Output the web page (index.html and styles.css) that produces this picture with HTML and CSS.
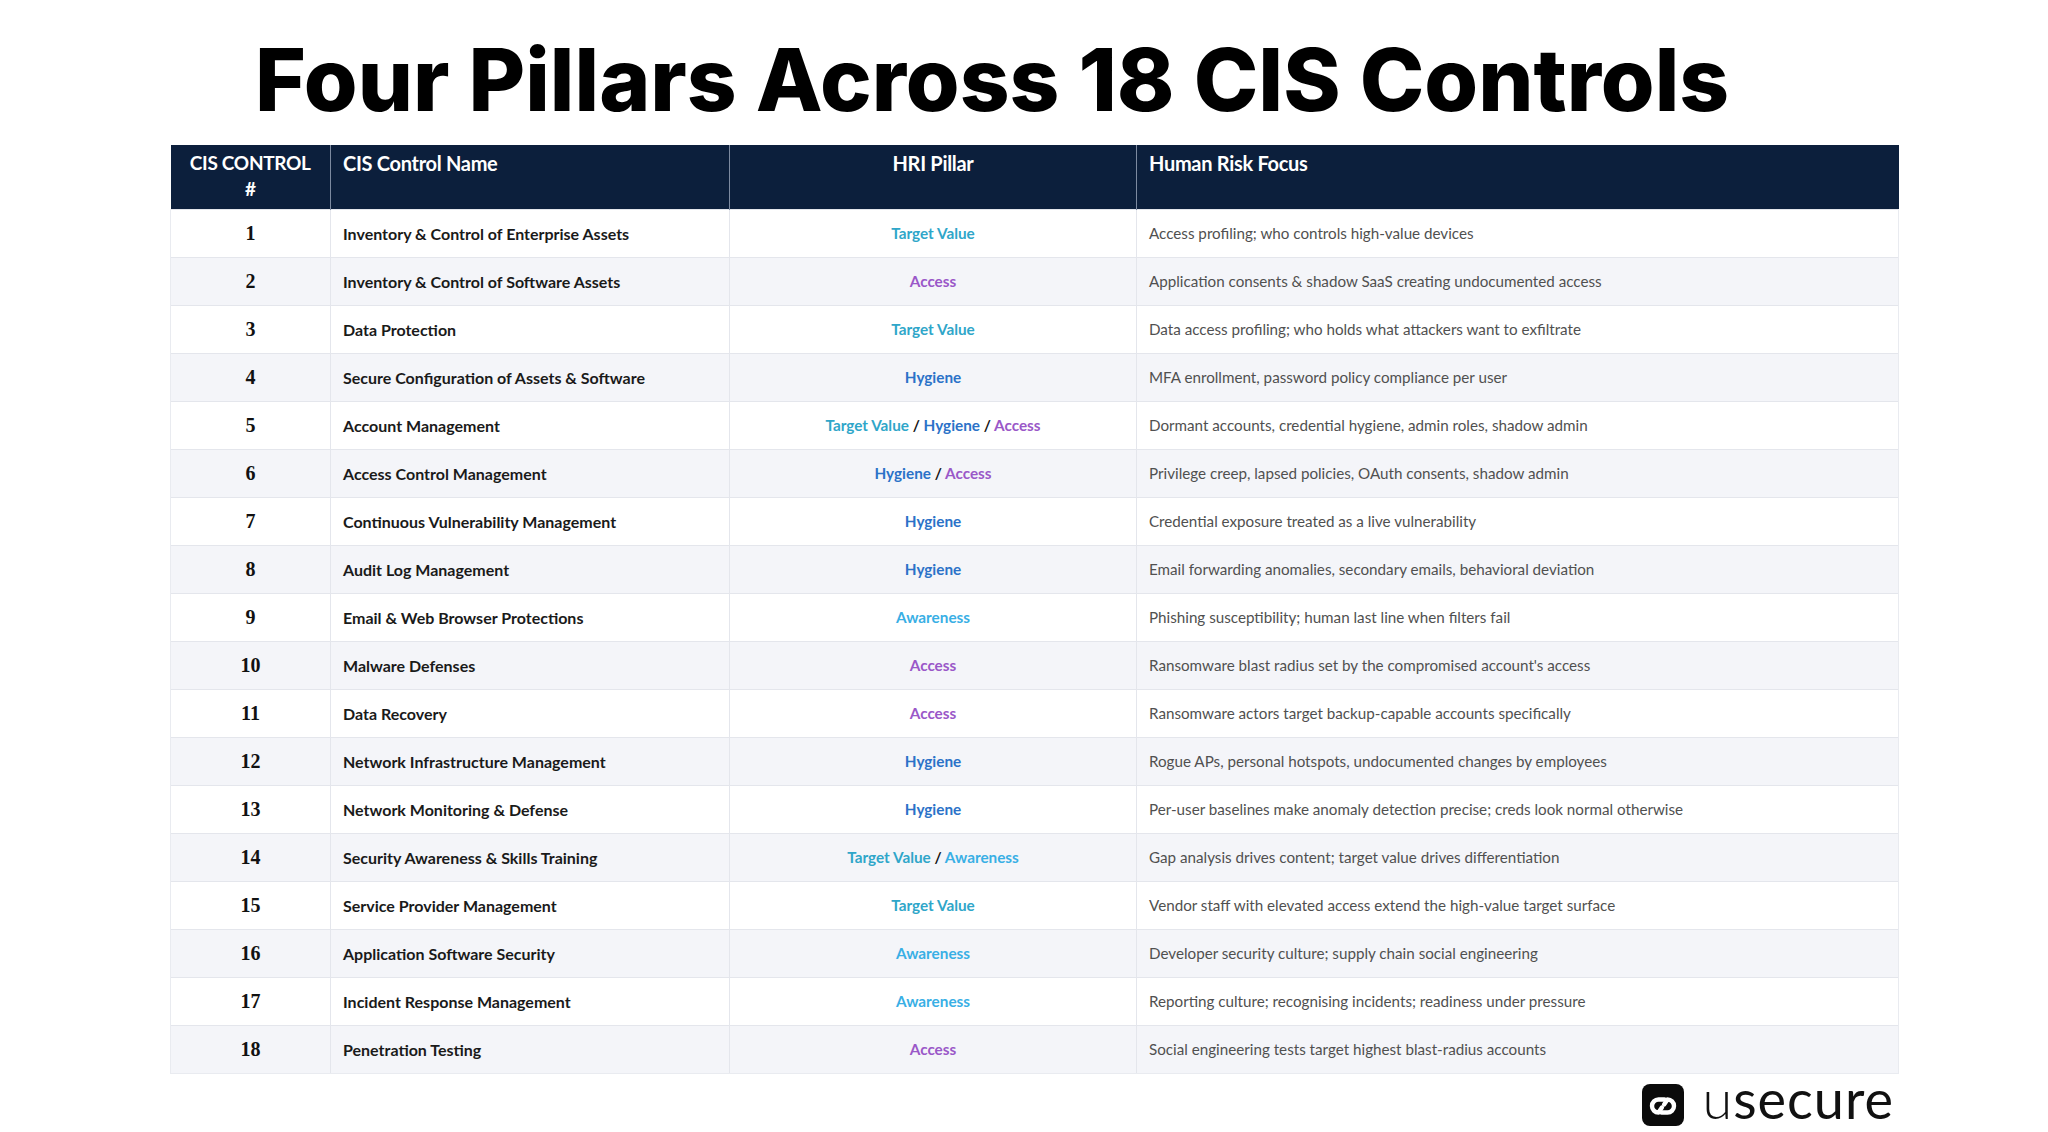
FILE: index.html
```html
<!DOCTYPE html>
<html lang="en">
<head>
<meta charset="utf-8">
<title>Four Pillars Across 18 CIS Controls</title>
<link rel="stylesheet" href="styles.css">
</head>
<body>
<div class="page">
  <h1 class="title">Four Pillars Across 18 CIS Controls</h1>
  <table class="cis">
    <colgroup>
      <col class="c-num"><col class="c-name"><col class="c-pillar"><col class="c-focus">
    </colgroup>
    <thead>
      <tr>
        <th class="num">CIS CONTROL<br>#</th>
        <th class="name">CIS Control Name</th>
        <th class="pillar">HRI Pillar</th>
        <th class="focus">Human Risk Focus</th>
      </tr>
    </thead>
    <tbody>
      <tr><td class="num">1</td><td class="name">Inventory &amp; Control of Enterprise Assets</td><td class="pillar"><span class="tv">Target Value</span></td><td class="focus">Access profiling; who controls high-value devices</td></tr>
      <tr><td class="num">2</td><td class="name">Inventory &amp; Control of Software Assets</td><td class="pillar"><span class="ac">Access</span></td><td class="focus">Application consents &amp; shadow SaaS creating undocumented access</td></tr>
      <tr><td class="num">3</td><td class="name">Data Protection</td><td class="pillar"><span class="tv">Target Value</span></td><td class="focus">Data access profiling; who holds what attackers want to exfiltrate</td></tr>
      <tr><td class="num">4</td><td class="name">Secure Configuration of Assets &amp; Software</td><td class="pillar"><span class="hy">Hygiene</span></td><td class="focus">MFA enrollment, password policy compliance per user</td></tr>
      <tr><td class="num">5</td><td class="name">Account Management</td><td class="pillar"><span class="tv">Target Value</span> / <span class="hy">Hygiene</span> / <span class="ac">Access</span></td><td class="focus">Dormant accounts, credential hygiene, admin roles, shadow admin</td></tr>
      <tr><td class="num">6</td><td class="name">Access Control Management</td><td class="pillar"><span class="hy">Hygiene</span> / <span class="ac">Access</span></td><td class="focus">Privilege creep, lapsed policies, OAuth consents, shadow admin</td></tr>
      <tr><td class="num">7</td><td class="name">Continuous Vulnerability Management</td><td class="pillar"><span class="hy">Hygiene</span></td><td class="focus">Credential exposure treated as a live vulnerability</td></tr>
      <tr><td class="num">8</td><td class="name">Audit Log Management</td><td class="pillar"><span class="hy">Hygiene</span></td><td class="focus">Email forwarding anomalies, secondary emails, behavioral deviation</td></tr>
      <tr><td class="num">9</td><td class="name">Email &amp; Web Browser Protections</td><td class="pillar"><span class="aw">Awareness</span></td><td class="focus">Phishing susceptibility; human last line when filters fail</td></tr>
      <tr><td class="num">10</td><td class="name">Malware Defenses</td><td class="pillar"><span class="ac">Access</span></td><td class="focus">Ransomware blast radius set by the compromised account's access</td></tr>
      <tr><td class="num">11</td><td class="name">Data Recovery</td><td class="pillar"><span class="ac">Access</span></td><td class="focus">Ransomware actors target backup-capable accounts specifically</td></tr>
      <tr><td class="num">12</td><td class="name">Network Infrastructure Management</td><td class="pillar"><span class="hy">Hygiene</span></td><td class="focus">Rogue APs, personal hotspots, undocumented changes by employees</td></tr>
      <tr><td class="num">13</td><td class="name">Network Monitoring &amp; Defense</td><td class="pillar"><span class="hy">Hygiene</span></td><td class="focus">Per-user baselines make anomaly detection precise; creds look normal otherwise</td></tr>
      <tr><td class="num">14</td><td class="name">Security Awareness &amp; Skills Training</td><td class="pillar"><span class="tv">Target Value</span> / <span class="aw">Awareness</span></td><td class="focus">Gap analysis drives content; target value drives differentiation</td></tr>
      <tr><td class="num">15</td><td class="name">Service Provider Management</td><td class="pillar"><span class="tv">Target Value</span></td><td class="focus">Vendor staff with elevated access extend the high-value target surface</td></tr>
      <tr><td class="num">16</td><td class="name">Application Software Security</td><td class="pillar"><span class="aw">Awareness</span></td><td class="focus">Developer security culture; supply chain social engineering</td></tr>
      <tr><td class="num">17</td><td class="name">Incident Response Management</td><td class="pillar"><span class="aw">Awareness</span></td><td class="focus">Reporting culture; recognising incidents; readiness under pressure</td></tr>
      <tr><td class="num">18</td><td class="name">Penetration Testing</td><td class="pillar"><span class="ac">Access</span></td><td class="focus">Social engineering tests target highest blast-radius accounts</td></tr>
    </tbody>
  </table>
  <div class="brand">
    <span class="brand-icon">
      <svg viewBox="0 0 42 42" width="42" height="42">
        <rect x="0" y="0" width="42" height="42" rx="8" fill="#0b0b0b"/>
        <path d="M22.5 15.5 H16.5 A6.5 6.5 0 0 0 16.5 28.5 L19.9 23.6" fill="none" stroke="#fff" stroke-width="4.4" stroke-linecap="round" stroke-linejoin="round"/>
        <path d="M19.5 28.5 H25.5 A6.5 6.5 0 0 0 25.5 15.5 L22.1 20.4" fill="none" stroke="#fff" stroke-width="4.4" stroke-linecap="round" stroke-linejoin="round"/>
      </svg>
    </span>
    <span class="brand-text"><span class="brand-u">u</span>secure</span>
  </div>
</div>
</body>
</html>
```
FILE: styles.css
```css
html, body {
  margin: 0;
  padding: 0;
  background: #ffffff;
}
.page {
  width: 2048px;
  height: 1132px;
  overflow: hidden;
  display: flex;
  flex-direction: column;
  align-items: flex-start;
}
.title {
  margin: 0;
  padding: 30px 0 0 255px;
  height: 115px;
  box-sizing: border-box;
  font-family: "Inter", "Liberation Sans", sans-serif;
  font-weight: 800;
  font-size: 87px;
  line-height: 100px;
  color: #000;
  white-space: nowrap;
}
.cis {
  margin: 30px 0 0 170px;
  width: 1728px;
  border-collapse: collapse;
  table-layout: fixed;
  font-family: "Lato", "Liberation Sans", sans-serif;
}
.c-num { width: 160px; }
.c-name { width: 399px; }
.c-pillar { width: 407px; }
.c-focus { width: 762px; }
.cis thead th {
  background: #0c1f3c;
  color: #ffffff;
  font-weight: 700;
  font-size: 20px;
  line-height: 26px;
  height: 64px;
  box-sizing: border-box;
  padding: 5px 12px 0;
  vertical-align: top;
  text-align: left;
  border-left: 1px solid #7d8aa0;
  letter-spacing: -0.3px;
}
.cis thead th:first-child { border-left: none; }
.cis thead th.num, .cis thead th.pillar { text-align: center; }
.cis thead th.num { padding: 5px 2px 0; font-size: 19px; }
.cis tbody td {
  height: 48px;
  box-sizing: border-box;
  padding: 0 12px;
  border-top: 1px solid #e4e6ec;
  border-left: 1px solid #e4e6ec;
  vertical-align: middle;
  white-space: nowrap;
}
.cis tbody td:first-child { border-left: 1px solid #e9ebf0; }
.cis tbody td:last-child { border-right: 1px solid #e9ebf0; }
.cis tbody tr:last-child td { border-bottom: 1px solid #e9ebf0; }
.cis tbody tr:nth-child(even) td { background: #f4f5f9; }
.cis tbody tr:nth-child(odd) td { background: #ffffff; }
td.num {
  text-align: center;
  font-family: "Liberation Serif", "DejaVu Serif", serif;
  font-weight: 700;
  font-size: 20px;
  color: #111;
}
td.name {
  font-weight: 700;
  font-size: 16px;
  color: #1a1a1a;
}
td.pillar {
  text-align: center;
  font-weight: 700;
  font-size: 15.3px;
  color: #111;
}
td.focus {
  font-size: 15.2px;
  color: #505050;
}
.tv { color: #2fa6c9; }
.hy { color: #2b72c8; }
.ac { color: #9a58c8; }
.aw { color: #39afe5; }
.brand {
  align-self: flex-end;
  margin: 10px 154px 0 0;
  display: flex;
  align-items: flex-start;
  gap: 18px;
}
.brand-icon {
  display: block;
  width: 42px;
  height: 42px;
}
.brand-icon svg { display: block; }
.brand-text {
  margin-top: -3px;
  font-family: "Lato", "Liberation Sans", sans-serif;
  font-size: 54px;
  line-height: 36px;
  font-weight: 400;
  color: #111;
  letter-spacing: 1px;
}
.brand-u { font-weight: 300; }
```
